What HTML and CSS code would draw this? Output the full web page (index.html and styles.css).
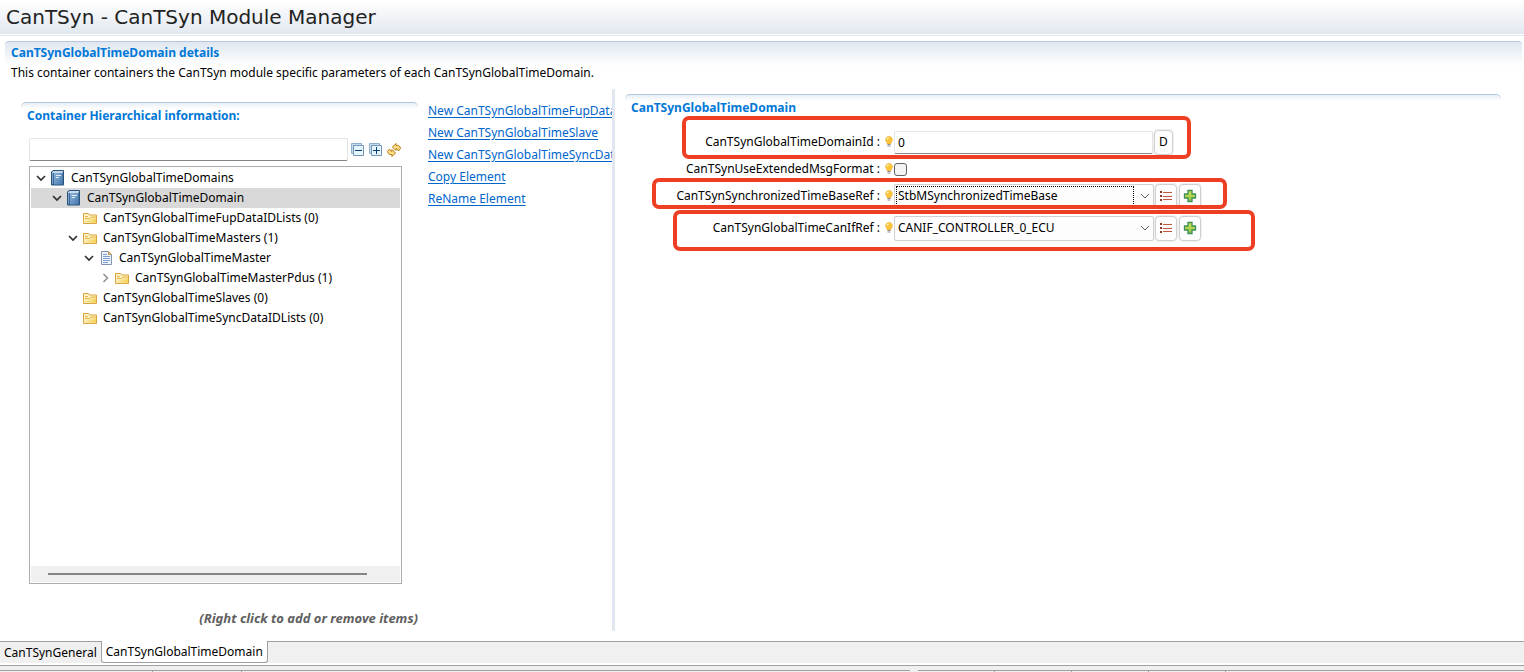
FILE: index.html
```html
<!DOCTYPE html>
<html lang="en">
<head>
    <meta charset="UTF-8">
    <meta name="viewport" content="width=device-width, initial-scale=1.0">
    <title>CanTSyn Module Manager</title>
    <link rel="stylesheet" href="styles.css">
</head>
<body>
    <svg class="defs" width="0" height="0">
        <defs>
            <linearGradient id="bookFill" x1="0" y1="0" x2="1" y2="1">
                <stop offset="0" stop-color="#8fb4d9"/>
                <stop offset="1" stop-color="#4478ad"/>
            </linearGradient>
            <linearGradient id="folderFill" x1="0" y1="0" x2="1" y2="1">
                <stop offset="0" stop-color="#fffdf0"/>
                <stop offset="1" stop-color="#f3c93a"/>
            </linearGradient>
            <linearGradient id="plusFill" x1="0" y1="0" x2="0" y2="1">
                <stop offset="0" stop-color="#d3ea55"/>
                <stop offset="1" stop-color="#8fc046"/>
            </linearGradient>
            <symbol id="icon-open" viewBox="0 0 10 10">
                <path d="M1 3l4 4 4-4" fill="none" stroke="#303030" stroke-width="1.7"/>
            </symbol>
            <symbol id="icon-closed" viewBox="0 0 10 10">
                <path d="M3.5 1l4 4-4 4" fill="none" stroke="#8e8e8e" stroke-width="1.5"/>
            </symbol>
            <symbol id="icon-book" viewBox="0 0 17 16">
                <path d="M3 .5h10.500v14.500H1.500V2z" fill="#3a6898" stroke="#2b527d"/>
                <path d="M4 3h8.500v11.500H4z" fill="url(#bookFill)"/>
                <path d="M2 2.500h10.500M3 1.500h10" stroke="#c5d9ec"/>
                <path d="M2.500 3v11" stroke="#7da3c8"/>
                <path d="M6 5.500h5M6 7.500h3" stroke="#e4eef7"/>
            </symbol>
            <symbol id="icon-folder" viewBox="0 0 17 16">
                <path d="M1.500 13.500v-10h5l1 1.500h7v8.500z" fill="#fff3c4" stroke="#d9a441"/>
                <path d="M3 12.500V8.500h4.500L9 7h5v5.500z" fill="url(#folderFill)"/>
                <path d="M3 8.500h4.500L9 7h5" fill="none" stroke="#e5b443"/>
                <path d="M3 6.500h3" stroke="#e8b950"/>
            </symbol>
            <symbol id="icon-page" viewBox="0 0 17 16">
                <path d="M3.500 1.500h7l3 3v10h-10z" fill="#eef4fc" stroke="#8494b0"/>
                <path d="M10.500 1.500v3h3z" fill="#f0cf84" stroke="#b99a55"/>
                <path d="M5 4.500h4M5 6.500h7M5 8.500h7M5 10.500h7M5 12.500h5" stroke="#7f9fd0"/>
            </symbol>
            <symbol id="icon-bulb" viewBox="0 0 8 12">
                <path d="M4 .5c2 0 3.400 1.300 3.400 3.200C7.400 5.400 6 6 5.700 8H2.300C2 6 .6 5.400.6 3.700.6 1.800 2 .5 4 .5z" fill="#fcc438" stroke="#eda92d" stroke-width=".6"/>
                <path d="M2.200 3.500c0-1 .7-1.600 1.600-1.600" fill="none" stroke="#fff4bf" stroke-width="1.300"/>
                <path d="M2.500 8.500h3M2.500 10h3" stroke="#8d8b91"/>
            </symbol>
            <symbol id="icon-list" viewBox="0 0 14 12">
                <path d="M1 2h2M1 6h2M1 10h2" stroke="#8e3525" stroke-width="2"/>
                <path d="M4 2.500h9M4 6.500h9M4 9.500h9" stroke="#c2573c"/>
            </symbol>
            <symbol id="icon-plus" viewBox="0 0 14 14">
                <path d="M5 1.500h4V5h3.500v4H9v3.500H5V9H1.500V5H5z" fill="url(#plusFill)" stroke="#3e8f55" stroke-width="1.300"/>
            </symbol>
            <symbol id="icon-down" viewBox="0 0 10 6">
                <path d="M1 1l4 4 4-4" fill="none" stroke="#606060"/>
            </symbol>
        </defs>
    </svg>

    <header class="title-bar">
        <h1>CanTSyn - CanTSyn Module Manager</h1>
    </header>

    <main class="details">
        <div class="details-head">
            <h2>CanTSynGlobalTimeDomain details</h2>
            <p>This container containers the CanTSyn module specific parameters of each CanTSynGlobalTimeDomain.</p>
        </div>

        <div class="split">
            <div class="left">
                <section class="hierarchy">
                    <h2 class="panel-title">Container Hierarchical information:</h2>
                    <div class="filter">
                        <input type="text" class="text-field" aria-label="Filter">
                        <div class="tools">
                            <button type="button" class="tool" aria-label="Collapse all">
                                <svg width="14" height="14" viewBox="0 0 14 14">
                                    <path d="M.5 10.500h2v-8h8v-2H.5z" fill="#c4dcf0" stroke="#8fb0cd"/>
                                    <path d="M2.500 2.500h10v10h-10z" fill="#e5f5fd" stroke="#7695b5"/>
                                    <path d="M4 7.500h7" stroke="#083f78"/>
                                </svg>
                            </button>
                            <button type="button" class="tool" aria-label="Expand all">
                                <svg width="14" height="14" viewBox="0 0 14 14">
                                    <path d="M.5 10.500h2v-8h8v-2H.5z" fill="#c4dcf0" stroke="#8fb0cd"/>
                                    <path d="M2.500 2.500h10v10h-10z" fill="#e5f5fd" stroke="#7695b5"/>
                                    <path d="M4 7.500h7M7.500 4v7" stroke="#083f78"/>
                                </svg>
                            </button>
                            <button type="button" class="tool" aria-label="Refresh">
                                <svg width="14" height="14" viewBox="0 0 14 14">
                                    <path d="M5.500 4L9 .5v2c2.500-.5 4 .5 4.500 3l-2 2.500C11 6.500 10.500 5.700 9 5.700V7.500z" fill="#ffe08a" stroke="#b87911"/>
                                    <path d="M8.500 10L5 13.500v-2c-2.500.5-4-.5-4.500-3L2.500 6C3 7.500 3.500 8.300 5 8.300V6.500z" fill="#ffe08a" stroke="#b87911"/>
                                </svg>
                            </button>
                        </div>
                    </div>
                    <div class="tree">
                        <ul>
                            <li>
                                <div class="node">
                                    <button type="button" class="toggle" aria-label="Collapse"><svg><use href="#icon-open"/></svg></button>
                                    <svg class="node-icon"><use href="#icon-book"/></svg>
                                    <span>CanTSynGlobalTimeDomains</span>
                                </div>
                                <ul>
                                    <li>
                                        <div class="node selected">
                                            <button type="button" class="toggle" aria-label="Collapse"><svg><use href="#icon-open"/></svg></button>
                                            <svg class="node-icon"><use href="#icon-book"/></svg>
                                            <span>CanTSynGlobalTimeDomain</span>
                                        </div>
                                        <ul>
                                            <li>
                                                <div class="node leaf">
                                                    <svg class="node-icon"><use href="#icon-folder"/></svg>
                                                    <span>CanTSynGlobalTimeFupDataIDLists (0)</span>
                                                </div>
                                            </li>
                                            <li>
                                                <div class="node">
                                                    <button type="button" class="toggle" aria-label="Collapse"><svg><use href="#icon-open"/></svg></button>
                                                    <svg class="node-icon"><use href="#icon-folder"/></svg>
                                                    <span>CanTSynGlobalTimeMasters (1)</span>
                                                </div>
                                                <ul>
                                                    <li>
                                                        <div class="node">
                                                            <button type="button" class="toggle" aria-label="Collapse"><svg><use href="#icon-open"/></svg></button>
                                                            <svg class="node-icon"><use href="#icon-page"/></svg>
                                                            <span>CanTSynGlobalTimeMaster</span>
                                                        </div>
                                                        <ul>
                                                            <li>
                                                                <div class="node">
                                                                    <button type="button" class="toggle" aria-label="Expand"><svg><use href="#icon-closed"/></svg></button>
                                                                    <svg class="node-icon"><use href="#icon-folder"/></svg>
                                                                    <span>CanTSynGlobalTimeMasterPdus (1)</span>
                                                                </div>
                                                            </li>
                                                        </ul>
                                                    </li>
                                                </ul>
                                            </li>
                                            <li>
                                                <div class="node leaf">
                                                    <svg class="node-icon"><use href="#icon-folder"/></svg>
                                                    <span>CanTSynGlobalTimeSlaves (0)</span>
                                                </div>
                                            </li>
                                            <li>
                                                <div class="node leaf">
                                                    <svg class="node-icon"><use href="#icon-folder"/></svg>
                                                    <span>CanTSynGlobalTimeSyncDataIDLists (0)</span>
                                                </div>
                                            </li>
                                        </ul>
                                    </li>
                                </ul>
                            </li>
                        </ul>
                        <div class="scrollbar"><div class="thumb"></div></div>
                    </div>
                    <p class="hint">(Right click to add or remove items)</p>
                </section>

                <nav class="actions">
                    <a href="#">New CanTSynGlobalTimeFupDataIDList</a>
                    <a href="#">New CanTSynGlobalTimeSlave</a>
                    <a href="#">New CanTSynGlobalTimeSyncDataIDList</a>
                    <a href="#">Copy Element</a>
                    <a href="#">ReName Element</a>
                </nav>
            </div>

            <div class="sash"></div>

            <section class="properties">
                <h2 class="panel-title">CanTSynGlobalTimeDomain</h2>
                <form>
                    <div class="row">
                        <label for="domainId">CanTSynGlobalTimeDomainId :</label>
                        <svg class="bulb"><use href="#icon-bulb"/></svg>
                        <input type="text" id="domainId" class="text-field" value="0">
                        <button type="button" class="push letter">D</button>
                        <span class="mark mark-id"></span>
                    </div>
                    <div class="row compact">
                        <label for="extendedFormat">CanTSynUseExtendedMsgFormat :</label>
                        <svg class="bulb"><use href="#icon-bulb"/></svg>
                        <input type="checkbox" id="extendedFormat">
                    </div>
                    <div class="row">
                        <label for="timeBaseRef">CanTSynSynchronizedTimeBaseRef :</label>
                        <svg class="bulb"><use href="#icon-bulb"/></svg>
                        <div class="combo active">
                            <select id="timeBaseRef">
                                <option>StbMSynchronizedTimeBase</option>
                            </select>
                            <svg class="arrow"><use href="#icon-down"/></svg>
                        </div>
                        <button type="button" class="push" aria-label="List"><svg width="14" height="12"><use href="#icon-list"/></svg></button>
                        <button type="button" class="push" aria-label="Add"><svg width="14" height="14"><use href="#icon-plus"/></svg></button>
                        <span class="mark mark-base"></span>
                    </div>
                    <div class="row">
                        <label for="canIfRef">CanTSynGlobalTimeCanIfRef :</label>
                        <svg class="bulb"><use href="#icon-bulb"/></svg>
                        <div class="combo">
                            <select id="canIfRef">
                                <option>CANIF_CONTROLLER_0_ECU</option>
                            </select>
                            <svg class="arrow"><use href="#icon-down"/></svg>
                        </div>
                        <button type="button" class="push" aria-label="List"><svg width="14" height="12"><use href="#icon-list"/></svg></button>
                        <button type="button" class="push" aria-label="Add"><svg width="14" height="14"><use href="#icon-plus"/></svg></button>
                        <span class="mark mark-canif"></span>
                    </div>
                </form>
            </section>
        </div>
    </main>

    <footer>
        <div class="tabs" role="tablist">
            <button type="button" class="tab" role="tab">CanTSynGeneral</button>
            <button type="button" class="tab current" role="tab" aria-selected="true">CanTSynGlobalTimeDomain</button>
        </div>
        <div class="views">
            <div class="view view-left"></div>
            <div class="view view-right"></div>
        </div>
    </footer>
</body>
</html>
```

FILE: styles.css
```css
* {
    box-sizing: border-box;
}

body {
    margin: 0;
    min-height: 100vh;
    display: flex;
    flex-direction: column;
    background-color: white;
    color: black;
    font-family: "Noto Sans", "Open Sans", sans-serif;
    font-size: 12px;
    line-height: 20px;
}

h1, h2, p, ul {
    margin: 0;
    padding: 0;
}

button, input, select {
    font: inherit;
    color: inherit;
    margin: 0;
    padding: 0;
}

svg {
    display: block;
    flex: none;
}

.defs {
    position: absolute;
}

/* title */
.title-bar {
    height: 36px;
    padding: 4px 6px 0;
    background: linear-gradient(white, #e2e8f0 34px, white 34px, white 35px, #dfe6ef 35px);
}

.title-bar h1 {
    font-family: "DejaVu Sans", Verdana, sans-serif;
    font-size: 20px;
    font-weight: normal;
    line-height: 26px;
    color: #222;
}

/* details section */
.details {
    flex: 1;
    display: flex;
    flex-direction: column;
    padding: 5px 0 10px;
}

.details-head {
    height: 48px;
    margin: 0 2px 0 5px;
    padding: 1px 6px;
    border-top: 1px solid #b5c7de;
    border-radius: 4px 4px 0 0;
    background: linear-gradient(#e0e7f0, white 24px);
}

h2 {
    font-size: 12px;
    line-height: 20px;
    color: #0078d7;
}

.split {
    flex: 1;
    display: grid;
    grid-template-columns: 612fr 3px 909fr;
}

.sash {
    background-color: #e1e8f1;
}

.left {
    display: flex;
    gap: 10px;
    padding: 11px 0 0 21px;
    min-width: 0;
}

.panel-title {
    padding: 3px 6px 0;
    border-top: 1px solid #b5c7de;
    border-radius: 5px 5px 0 0;
    background: linear-gradient(#e8eef6, white 6px);
}

/* hierarchy panel */
.hierarchy {
    flex: 1;
    min-width: 0;
    display: flex;
    flex-direction: column;
    padding-top: 2px;
}

.filter {
    display: flex;
    align-items: center;
    gap: 3px;
    margin: 12px 17px 5px 8px;
}

.tools {
    display: flex;
    gap: 4px;
}

.text-field {
    height: 23px;
    min-width: 0;
    padding: 0 3px;
    border: 1px solid #e5e5e5;
    border-bottom-color: #868686;
    border-radius: 2px;
    background-color: white;
    outline: none;
}

.filter .text-field {
    flex: 1;
}

.tool {
    border: none;
    background: none;
}

.tree {
    flex: 1;
    display: flex;
    flex-direction: column;
    margin: 0 16px 0 8px;
    padding: 1px;
    border: 1px solid #abadb3;
}

.tree > ul {
    flex: 1;
}

.tree ul {
    list-style: none;
}

.node {
    display: flex;
    align-items: center;
    gap: 4px;
    height: 20px;
    padding-left: 5px;
    white-space: nowrap;
}

/* one step of 16px for each level */
.tree ul ul .node {
    padding-left: 21px;
}

.tree ul ul ul .node {
    padding-left: 37px;
}

.tree ul ul ul ul .node {
    padding-left: 53px;
}

.tree ul ul ul ul ul .node {
    padding-left: 69px;
}

.tree ul ul ul .leaf {
    padding-left: 51px;
}

.selected {
    background-color: #d9d9d9;
}

.toggle {
    border: none;
    background: none;
}

.toggle svg {
    width: 10px;
    height: 10px;
}

.node-icon {
    width: 17px;
    height: 16px;
}

.scrollbar {
    height: 16px;
    padding: 7px 33px 0 17px;
    background-color: #f0f0f0;
}

.thumb {
    height: 2px;
    background-color: #858585;
}

.hint {
    padding: 24px 0 3px;
    font-size: 13px;
    font-style: italic;
    font-weight: bold;
    color: #606060;
    text-align: right;
}

.actions {
    flex: none;
    width: 184px;
    overflow: hidden;
    display: flex;
    flex-direction: column;
    align-items: flex-start;
    line-height: 22px;
    white-space: nowrap;
}

.actions a {
    color: #0066cc;
    text-underline-offset: 2px;
}

/* properties form */
.properties {
    padding: 5px 23px 0 10px;
    min-width: 0;
}

.properties form {
    padding-top: 8px;
}

.row {
    position: relative;
    display: flex;
    align-items: center;
    height: 32px;
}

.compact {
    height: 22px;
}

.row label {
    width: 255px;
    text-align: right;
    white-space: nowrap;
}

.bulb {
    width: 8px;
    height: 12px;
    margin: 0 1px 0 5px;
}

.row .text-field {
    width: 259px;
}

.row input[type="checkbox"] {
    appearance: none;
    width: 13px;
    height: 13px;
    border: 1px solid #626262;
    border-radius: 3px;
    background-color: #f3f3f3;
}

.combo {
    width: 260px;
    height: 25px;
    display: flex;
    align-items: center;
    padding: 0 3px 0 1px;
    border: 1px solid #d0d0d0;
    border-radius: 2px;
    background-color: #fdfdfd;
}

.combo select {
    appearance: none;
    flex: 1;
    height: 20px;
    margin-right: 6px;
    padding: 0 1px;
    border: 1px solid transparent;
    background: none;
    line-height: 18px;
    outline: none;
}

.active select {
    border: 1px dotted black;
}

.arrow {
    width: 10px;
    height: 6px;
}

.push {
    width: 22px;
    height: 25px;
    margin-left: 1px;
    display: flex;
    align-items: center;
    justify-content: center;
    border: 1px solid #d0d0d0;
    border-radius: 4px;
    background-color: #fdfdfd;
    box-shadow: 0 0 0 1px #f0f0f0;
}

.push + .push {
    margin-left: 2px;
}

.letter {
    width: 19px;
}

/* highlight frames around the rows */
.mark {
    position: absolute;
    border: 4px solid #ee3f24;
    border-radius: 7px;
    pointer-events: none;
}

.mark-id {
    top: -10px;
    left: 57px;
    width: 509px;
    height: 43px;
}

.mark-base {
    top: -2px;
    left: 27px;
    width: 575px;
    height: 31px;
}

.mark-canif {
    top: -2px;
    left: 48px;
    width: 582px;
    height: 41px;
}

/* page tabs */
.tabs {
    display: flex;
    height: 22px;
    border-top: 1px solid #a0a0a0;
    background-color: #f0f0f0;
}

.tab {
    padding: 0 4px;
    border: none;
    background: none;
    line-height: 20px;
}

.current {
    margin-top: -1px;
    border: 1px solid #a0a0a0;
    border-top: none;
    border-radius: 0 0 3px 3px;
    background-color: white;
}

/* top edge of the views below the editor */
.views {
    display: grid;
    grid-template-columns: 3fr 2fr;
    gap: 8px;
    height: 9px;
    padding-top: 5px;
    background: linear-gradient(white 2px, #a0a0a0 2px, #a0a0a0 3px, #f0f0f0 3px);
    align-items: end;
}

.view {
    height: 2px;
    border-top: 1px solid #a0a0a0;
}

.view-left {
    background: linear-gradient(to right, #f0f0f0 152px, #a0a0a0 152px, #a0a0a0 153px, #f0f0f0 153px, #f0f0f0 241px, #a0a0a0 241px, #a0a0a0 242px, #f0f0f0 242px);
}

.view-right {
    background: repeating-linear-gradient(to right, #f0f0f0, #f0f0f0 76px, #a0a0a0 76px, #a0a0a0 77px) no-repeat;
    background-size: 309px 100%;
}
```
